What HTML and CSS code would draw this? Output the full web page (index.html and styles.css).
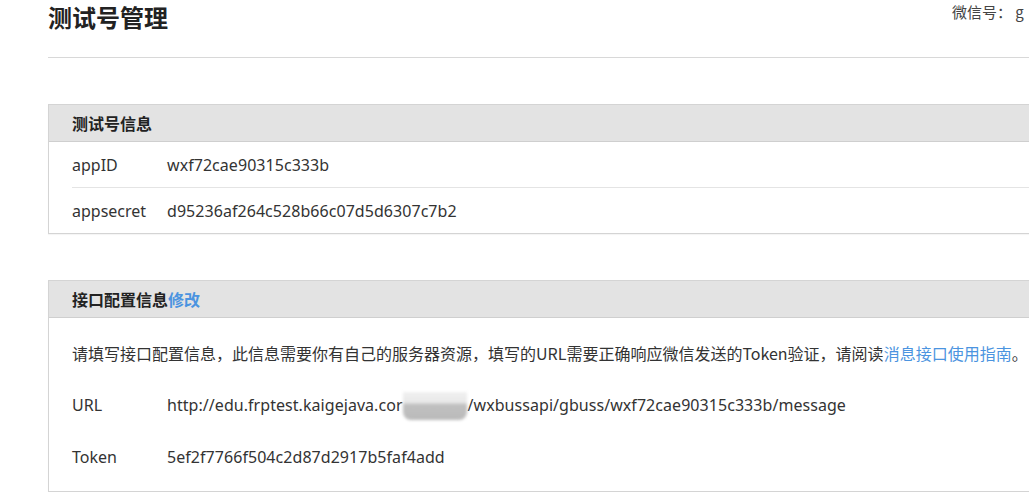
FILE: index.html
```html
<!DOCTYPE html>
<html lang="zh-CN">
<head>
<meta charset="utf-8">
<title>测试号管理</title>
<link rel="stylesheet" href="styles.css">
</head>
<body>
<div class="page">
  <header class="top">
    <h1 class="title">测试号管理</h1>
    <div class="wxid">微信号： g</div>
  </header>

  <section class="panel">
    <div class="panel-head">测试号信息</div>
    <div class="panel-body">
      <div class="row sep"><span class="label">appID</span><span class="val">wxf72cae90315c333b</span></div>
      <div class="row"><span class="label">appsecret</span><span class="val">d95236af264c528b66c07d5d6307c7b2</span></div>
    </div>
  </section>

  <section class="panel panel2">
    <div class="panel-head">接口配置信息<a class="link" href="#">修改</a></div>
    <div class="panel-body body2">
      <div class="row2 desc">请填写接口配置信息，此信息需要你有自己的服务器资源，填写的URL需要正确响应微信发送的Token验证，请阅读<a class="link" href="#">消息接口使用指南</a>。</div>
      <div class="row2"><span class="label">URL</span><span class="val">http://edu.frptest.kaigejava.cor<span class="blur"></span>/wxbussapi/gbuss/wxf72cae90315c333b/message</span></div>
      <div class="row2"><span class="label">Token</span><span class="val">5ef2f7766f504c2d87d2917b5faf4add</span></div>
    </div>
  </section>
</div>
</body>
</html>
```

FILE: styles.css
```css
html, body {
  margin: 0;
  padding: 0;
  background: #fff;
  overflow: hidden;
}
body {
  font-family: "Noto Sans", "Noto Sans CJK SC", sans-serif;
  color: #333;
  font-size: 16px;
}
.page {
  padding-left: 48px;
  width: 1100px;
}
.top {
  display: flex;
  align-items: flex-start;
  height: 57px;
  border-bottom: 1px solid #d8d8d8;
  box-sizing: content-box;
}
.title {
  margin: 0;
  font-size: 24px;
  line-height: 34px;
  font-weight: bold;
  color: #222;
  font-family: "Noto Sans CJK SC", sans-serif;
}
.wxid {
  margin-left: auto;
  width: 196px;
  font-size: 15px;
  line-height: 24px;
  color: #444;
  white-space: nowrap;
  font-family: "Noto Sans CJK SC", sans-serif;
}
.panel {
  margin-top: 46px;
  border: 1px solid #d4d4d4;
  border-right: none;
  box-shadow: 0 1px 1px rgba(0,0,0,0.04);
}
.panel2 {
  margin-top: 46px;
}
.panel-head {
  background: #e3e3e3;
  height: 36px;
  line-height: 37px;
  padding-left: 23px;
  border-bottom: 1px solid #cfcfcf;
  font-weight: bold;
  font-size: 16px;
  color: #222;
  font-family: "Noto Sans CJK SC", sans-serif;
}
.panel-head .link {
  font-weight: bold;
}
.link {
  color: #4b94e0;
  text-decoration: none;
}
.panel-body {
  padding: 0 0 0 23px;
}
.row {
  display: flex;
  align-items: center;
  height: 45px;
}
.row.sep {
  border-bottom: 1px solid #e4e4e4;
}
.label {
  width: 95px;
  flex: none;
  font-size: 16px;
}
.val {
  font-size: 16px;
  display: flex;
  align-items: center;
  white-space: nowrap;
  letter-spacing: 0.05px;
}
.body2 {
  padding-top: 9px;
  padding-bottom: 8px;
}
.row2 {
  display: flex;
  align-items: center;
  height: 52px;
}
.desc {
  display: block;
  line-height: 52px;
  white-space: nowrap;
  font-size: 16px;
  font-family: "Noto Sans CJK SC", sans-serif;
}
.blur {
  display: inline-block;
  width: 64px;
  height: 28px;
  margin: 0 1px 0 0;
  border-radius: 0 0 8px 8px;
  background: linear-gradient(to bottom, #f0f0f0 0%, #e8e8e8 38%, #c0c0c0 45%, #bababa 100%);
  filter: blur(1.5px);
  position: relative;
  top: 1px;
}
```
